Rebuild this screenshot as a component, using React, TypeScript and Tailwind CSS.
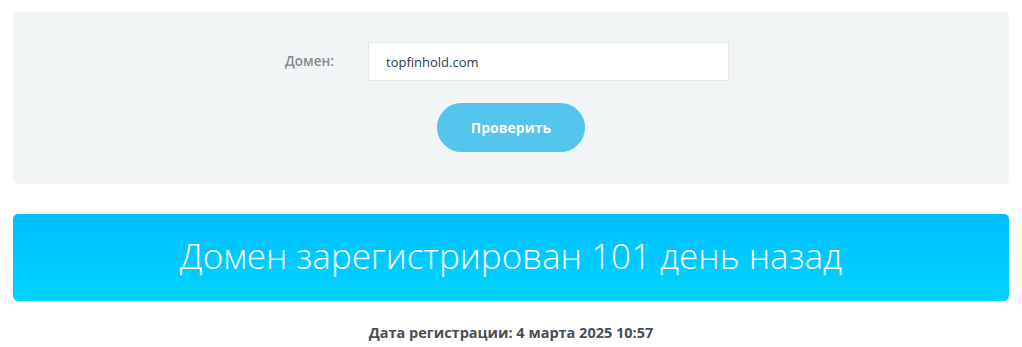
import { useState } from 'react';

export default function App() {
  const [domain, setDomain] = useState('topfinhold.com');

  return (
    <div className="min-h-[347px] w-full bg-white px-[13px] pt-[12px] font-['Open_Sans',sans-serif]">
      <div className="rounded-[5px] bg-[#f2f5f6] pt-[30px] pb-[32px]">
        <div className="flex items-center justify-center pr-[8px]">
          <label className="w-[83px] text-[13.5px] font-semibold text-[#8a8a8a]">Домен:</label>
          <input
            value={domain}
            onChange={(e) => setDomain(e.target.value)}
            className="h-[39px] w-[361px] border border-[#e6e9eb] bg-white px-[17px] text-[13px] text-[#2f3b4a] focus:outline-none"
          />
        </div>
        <div className="mt-[22px] flex justify-center">
          <button
            type="button"
            className="h-[49px] w-[148px] rounded-full bg-[#54c5ec] text-[14px] font-bold text-white"
          >
            Проверить
          </button>
        </div>
      </div>

      <div className="mt-[30px] flex h-[87px] items-center justify-center rounded-[5px] bg-gradient-to-b from-[#00bfff] to-[#00d3ff] pb-[3px]">
        <p className="text-[35px] font-light text-white">Домен зарегистрирован 101 день назад</p>
      </div>

      <p className="mt-[21px] text-center text-[14.5px] font-bold text-[#4a4f55]">
        Дата регистрации: 4 марта 2025 10:57
      </p>
    </div>
  );
}
